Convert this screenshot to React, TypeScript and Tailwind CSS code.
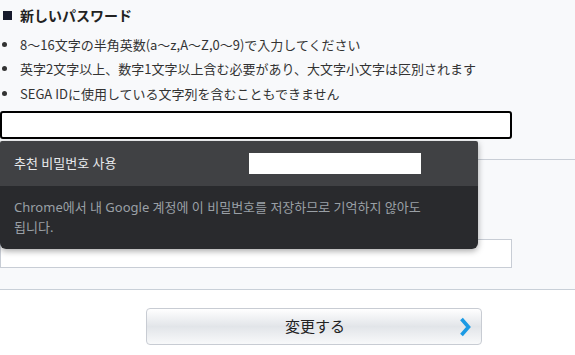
import { useState } from "react";

const rules = [
  "8～16文字の半角英数(a～z,A～Z,0～9)で入力してください",
  "英字2文字以上、数字1文字以上含む必要があり、大文字小文字は区別されます",
  "SEGA IDに使用している文字列を含むこともできません",
];

function Chevron() {
  return (
    <svg width="12" height="20" viewBox="0 0 12 20" className="shrink-0">
      <polyline
        points="2.5,2 9.5,10 2.5,18"
        fill="none"
        stroke="#1b9ae4"
        strokeWidth="3.6"
        strokeLinejoin="miter"
      />
    </svg>
  );
}

export default function App() {
  const [password, setPassword] = useState("");
  const [confirm, setConfirm] = useState("");

  return (
    <div className="relative w-[575px] h-[355px] overflow-hidden bg-white font-['Noto_Sans_CJK_JP',sans-serif] text-[#222]">
      <div className="bg-[#f8f9fb]">
        <div className="border-b border-[#c9ced6]">
          <h3 className="flex items-center h-[30px] pl-[3px] gap-[8px] text-[14px] font-bold">
            <span className="w-[9px] h-[9px] bg-[#161a2c]" />
            新しいパスワード
          </h3>
          <ul className="mt-[2px] text-[13px] text-[#333]">
            {rules.map((rule) => (
              <li key={rule} className="flex items-center h-[24.5px]">
                <span className="w-[5px] h-[5px] ml-[2px] mr-[13px] rounded-full bg-[#333]" />
                {rule}
              </li>
            ))}
          </ul>
          <input
            type="password"
            value={password}
            onChange={(e) => setPassword(e.target.value)}
            className="block mt-[5.5px] mb-[20px] w-[512px] h-[28px] bg-white border-2 border-black rounded-[3px] outline-none px-2 text-[13px]"
          />
        </div>
        <div className="pt-[79px] pb-[21px] border-b border-[#c9d0d8]">
          <input
            type="password"
            value={confirm}
            onChange={(e) => setConfirm(e.target.value)}
            className="block w-[512px] h-[29px] bg-white border border-[#c8cdd5] outline-none px-2 text-[13px]"
          />
        </div>
      </div>

      <div className="pt-[18px] pl-[146px]">
        <button className="flex items-center w-[336px] h-[37px] pl-[24px] pr-[10px] rounded-[4px] border border-[#c8ccd3] bg-linear-to-b from-white via-[#e2e5e9] to-[#f8f9fa]">
          <span className="flex-1 text-center text-[15px] text-[#222]">変更する</span>
          <Chevron />
        </button>
      </div>

      {/* Chrome password suggestion */}
      <div className="absolute top-[141px] left-0 w-[478px] rounded-t-[2px] rounded-b-[6px] overflow-hidden shadow-[0_2px_6px_rgba(0,0,0,0.35)] font-['Noto_Sans','Noto_Sans_CJK_KR',sans-serif] text-[13px]">
        <div className="flex items-center h-[45px] pl-[14px] bg-[#404144] text-[#e8eaed]">
          <span className="w-[235px]">추천 비밀번호 사용</span>
          <span className="w-[172px] h-[21px] bg-white" />
        </div>
        <div className="pt-[11px] pb-[12px] px-[14px] bg-[#292a2d] text-[#9aa0a6] leading-[20px]">
          Chrome에서 내 Google 계정에 이 비밀번호를 저장하므로 기억하지 않아도
          <br />
          됩니다.
        </div>
      </div>
    </div>
  );
}
